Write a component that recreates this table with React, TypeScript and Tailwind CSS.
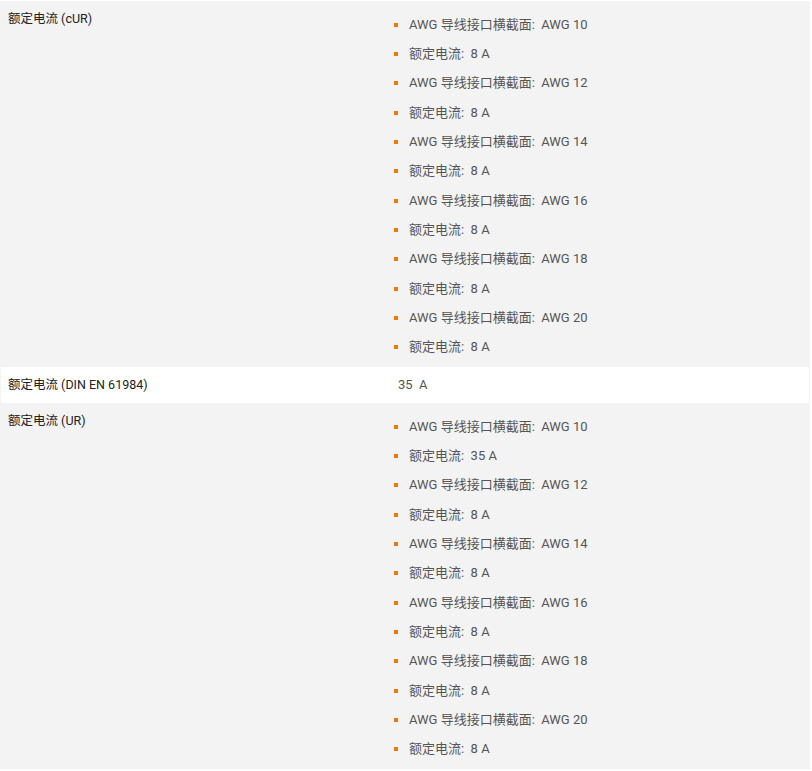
import React from 'react'

type Row = {
  label: string
  items?: string[]
  value?: string
  white?: boolean
}

const cur = ['10', '12', '14', '16', '18', '20'].flatMap((g) => [
  `AWG 导线接口横截面:  AWG ${g}`,
  '额定电流:  8 A',
])

const ur = cur.map((s, i) => (i === 1 ? '额定电流:  35 A' : s))

const ROWS: Row[] = [
  { label: '额定电流 (cUR)', items: cur },
  { label: '额定电流 (DIN EN 61984)', value: '35  A', white: true },
  { label: '额定电流 (UR)', items: ur },
]

function SpecRow({ row }: { row: Row }) {
  return (
    <div className={`grid grid-cols-[388px_1fr] ${row.white ? 'bg-white' : 'bg-[#f3f3f3]'}`}>
      <div className="pl-[7px] pt-[8px] pb-[8px] text-[12.5px] leading-5 text-[#222]">{row.label}</div>
      <div className="pl-[9px] pt-[8px] pb-[5px] text-[13px] leading-5 text-[#555]">
        {row.value && <span className="whitespace-pre">{row.value}</span>}
        {row.items && (
          <ul className="mt-[1px]">
            {row.items.map((t, i) => (
              <li key={i} className="flex h-[29.33px] items-center">
                <span className="ml-[-4px] mr-[11px] h-[4px] w-[4px] shrink-0 bg-[#f07800]" />
                <span className="whitespace-pre">{t}</span>
              </li>
            ))}
          </ul>
        )}
      </div>
    </div>
  )
}

export default function App() {
  return (
    <div
      className="min-h-screen bg-white pt-[1px]"
      style={{ fontFamily: 'Roboto, "Noto Sans CJK SC", sans-serif' }}
    >
      <div className="w-[810px] bg-[#f3f3f3] px-[1px]">
        {ROWS.map((r) => (
          <SpecRow key={r.label} row={r} />
        ))}
      </div>
    </div>
  )
}
